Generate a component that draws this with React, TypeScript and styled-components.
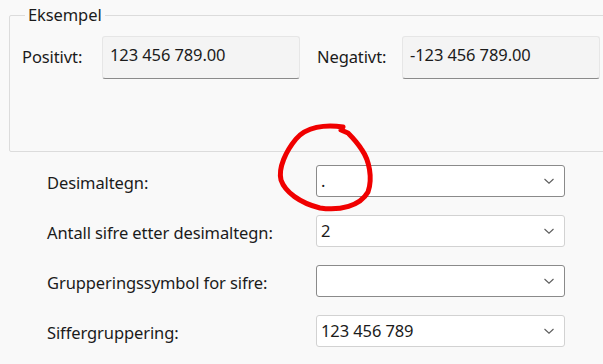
import styled, { createGlobalStyle } from "styled-components";

const Global = createGlobalStyle`
  html, body {
    margin: 0;
    padding: 0;
    background: #f9f9f9;
    overflow: hidden;
  }
  body {
    font-family: "Noto Sans", "Open Sans", sans-serif;
    color: #1b1b1b;
    font-size: 16.5px;
    letter-spacing: -0.1px;
  }
`;

const Page = styled.div`
  position: relative;
  width: 603px;
  height: 364px;
  overflow: hidden;
`;

const Group = styled.fieldset`
  margin: 5px 0 0 9px;
  padding: 11px 0 0 12px;
  width: 640px;
  height: 147px;
  box-sizing: border-box;
  border: 1px solid #dcdcdc;
  border-radius: 2px;
`;

const Legend = styled.legend`
  padding: 0 3px;
  margin-left: 3px;
  line-height: 20px;
`;

const SampleRow = styled.div`
  display: flex;
  align-items: flex-start;
`;

const SampleLabel = styled.span<{ $w: number }>`
  width: ${(p) => p.$w}px;
  padding-top: 10px;
  line-height: 22px;
`;

const SampleBox = styled.div`
  width: 198px;
  height: 43px;
  box-sizing: border-box;
  padding: 7px 7px;
  background: #f4f4f4;
  border: 1px solid #e6e6e6;
  border-bottom-color: #8a8a8a;
  border-radius: 3px;
  line-height: 22px;
  margin-right: 17px;
`;

const Form = styled.div`
  display: grid;
  grid-template-columns: 269px 249px;
  row-gap: 18px;
  padding: 13px 0 0 47px;
`;

const FieldLabel = styled.div`
  align-self: center;
  line-height: 22px;
  padding-top: 4px;
`;

const Combo = styled.div<{ $dark?: boolean }>`
  height: 32px;
  box-sizing: border-box;
  display: flex;
  align-items: center;
  justify-content: space-between;
  padding: 0 9px 0 4px;
  background: #fff;
  border: 1px solid ${(p) => (p.$dark ? "#8a8a8a" : "#d2d2d2")};
  border-radius: 3px;
  line-height: 22px;
`;

const Chevron = () => (
  <svg width="12" height="8" viewBox="0 0 12 8">
    <path d="M1.5 2 L6 6.2 L10.5 2" fill="none" stroke="#5c5c5c" strokeWidth="1.1" />
  </svg>
);

const Scribble = styled.svg`
  position: absolute;
  left: 0;
  top: 0;
  pointer-events: none;
`;

const rows = [
  { label: "Desimaltegn:", value: ".", dark: true },
  { label: "Antall sifre etter desimaltegn:", value: "2", dark: false },
  { label: "Grupperingssymbol for sifre:", value: "", dark: true },
  { label: "Siffergruppering:", value: "123 456 789", dark: false },
];

export default function App() {
  return (
    <Page>
      <Global />
      <Group>
        <Legend>Eksempel</Legend>
        <SampleRow>
          <SampleLabel $w={80}>Positivt:</SampleLabel>
          <SampleBox>123 456 789.00</SampleBox>
          <SampleLabel $w={85}>Negativt:</SampleLabel>
          <SampleBox>-123 456 789.00</SampleBox>
        </SampleRow>
      </Group>
      <Form>
        {rows.map((r) => (
          <>
            <FieldLabel key={r.label}>{r.label}</FieldLabel>
            <Combo key={r.label + "c"} $dark={r.dark}>
              <span>{r.value}</span>
              <Chevron />
            </Combo>
          </>
        ))}
      </Form>
      <Scribble width="603" height="364">
        <path
          d="M343 127 C325 124 306 127 296 139 C286 151 278 168 281 180 C285 192 300 203 320 208 C340 211 360 206 368 192 C373 178 369 160 362 150 C357 142 352 137 348 133 L341 130"
          fill="none"
          stroke="#f00000"
          strokeWidth="5"
          strokeLinecap="round"
          strokeLinejoin="round"
        />
      </Scribble>
    </Page>
  );
}
